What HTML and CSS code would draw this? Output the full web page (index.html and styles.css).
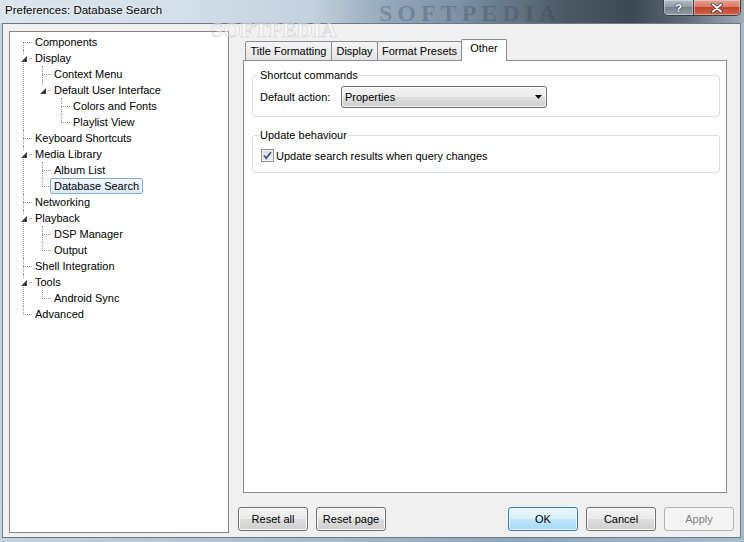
FILE: index.html
```html
<!DOCTYPE html>
<html lang="en">
<head>
    <meta charset="UTF-8">
    <title>Preferences: Database Search</title>
    <link rel="stylesheet" href="styles.css">
</head>
<body>
    <div class="window">
        <div class="titlebar">
            <span class="title">Preferences: Database Search</span>
            <div class="caption">
                <span class="cap-btn cap-help">?</span>
                <span class="cap-btn cap-close">
                    <svg width="12" height="10" viewBox="0 0 12 10">
                        <path d="M2 1.5 L10 8.5 M10 1.5 L2 8.5" stroke="#3a3f45" stroke-width="3.6" stroke-linecap="round"/>
                        <path d="M2 1.5 L10 8.5 M10 1.5 L2 8.5" stroke="#ffffff" stroke-width="2" stroke-linecap="round"/>
                    </svg>
                </span>
            </div>
        </div>

        <div class="client">
            <div class="tree-box">
                <ul class="tree">
                    <li><div class="row"><span class="label">Components</span></div></li>
                    <li>
                        <span class="exp"><svg width="6" height="6" viewBox="0 0 6 6"><polygon points="6,0 6,6 0,6" fill="#3c3c3c"/></svg></span>
                        <div class="row"><span class="label">Display</span></div>
                        <ul>
                            <li><div class="row"><span class="label">Context Menu</span></div></li>
                            <li>
                                <span class="exp"><svg width="6" height="6" viewBox="0 0 6 6"><polygon points="6,0 6,6 0,6" fill="#3c3c3c"/></svg></span>
                                <div class="row"><span class="label">Default User Interface</span></div>
                                <ul>
                                    <li><div class="row"><span class="label">Colors and Fonts</span></div></li>
                                    <li><div class="row"><span class="label">Playlist View</span></div></li>
                                </ul>
                            </li>
                        </ul>
                    </li>
                    <li><div class="row"><span class="label">Keyboard Shortcuts</span></div></li>
                    <li>
                        <span class="exp"><svg width="6" height="6" viewBox="0 0 6 6"><polygon points="6,0 6,6 0,6" fill="#3c3c3c"/></svg></span>
                        <div class="row"><span class="label">Media Library</span></div>
                        <ul>
                            <li><div class="row"><span class="label">Album List</span></div></li>
                            <li><div class="row"><span class="label selected">Database Search</span></div></li>
                        </ul>
                    </li>
                    <li><div class="row"><span class="label">Networking</span></div></li>
                    <li>
                        <span class="exp"><svg width="6" height="6" viewBox="0 0 6 6"><polygon points="6,0 6,6 0,6" fill="#3c3c3c"/></svg></span>
                        <div class="row"><span class="label">Playback</span></div>
                        <ul>
                            <li><div class="row"><span class="label">DSP Manager</span></div></li>
                            <li><div class="row"><span class="label">Output</span></div></li>
                        </ul>
                    </li>
                    <li><div class="row"><span class="label">Shell Integration</span></div></li>
                    <li>
                        <span class="exp"><svg width="6" height="6" viewBox="0 0 6 6"><polygon points="6,0 6,6 0,6" fill="#3c3c3c"/></svg></span>
                        <div class="row"><span class="label">Tools</span></div>
                        <ul>
                            <li><div class="row"><span class="label">Android Sync</span></div></li>
                        </ul>
                    </li>
                    <li><div class="row"><span class="label">Advanced</span></div></li>
                </ul>
            </div>

            <div class="right">
                <div class="tabs">
                    <span class="tab tab-title">Title Formatting</span>
                    <span class="tab tab-display">Display</span>
                    <span class="tab tab-presets">Format Presets</span>
                    <span class="tab tab-other active">Other</span>
                </div>

                <div class="panel">
                    <fieldset class="group">
                        <legend>Shortcut commands</legend>
                        <div class="field-row">
                            <span class="field-label">Default action:</span>
                            <div class="combo">
                                <span>Properties</span>
                                <svg width="7" height="4" viewBox="0 0 7 4"><polygon points="0,0 7,0 3.5,4" fill="#000"/></svg>
                            </div>
                        </div>
                    </fieldset>

                    <fieldset class="group group-update">
                        <legend>Update behaviour</legend>
                        <div class="check-row">
                            <span class="checkbox">
                                <svg width="11" height="11" viewBox="0 0 11 11"><polyline points="2,5.5 4.3,8.3 9,2" fill="none" stroke="#3e5a8c" stroke-width="1.8"/></svg>
                            </span>
                            <span>Update search results when query changes</span>
                        </div>
                    </fieldset>
                </div>

                <div class="buttons">
                    <div class="btn-group">
                        <button type="button" class="btn">Reset all</button>
                        <button type="button" class="btn">Reset page</button>
                    </div>
                    <div class="btn-group">
                        <button type="button" class="btn btn-default">OK</button>
                        <button type="button" class="btn">Cancel</button>
                        <button type="button" class="btn" disabled>Apply</button>
                    </div>
                </div>
            </div>
        </div>

        <span class="watermark wm-big">SOFTPEDIA</span>
        <span class="watermark wm-small">SOFTPEDIA</span>
    </div>
</body>
</html>
```

FILE: styles.css
```css
body {
    margin: 0;
    font-family: "Liberation Sans", Arial, sans-serif;
    font-size: 11px;
    color: #000;
}

.window {
    position: relative;
    width: 744px;
    height: 542px;
    display: flex;
    flex-direction: column;
    background: linear-gradient(90deg, #c3d2de 0%, #a9bccb 40%, #8ea5b9 70%, #a7bccd 100%);
    overflow: hidden;
}

/* glass title bar */
.titlebar {
    height: 23px;
    flex-shrink: 0;
    display: flex;
    justify-content: space-between;
    align-items: flex-start;
    padding-left: 5px;
    background: linear-gradient(90deg, #dbe5ee 0%, #d2dee8 25%, #c2d1de 42%, #93a8ba 52%, #7b90a3 62%, #4b5965 76%, #3c4955 85%, #5d6b77 92%, #9eacb8 100%);
}

.title {
    font-size: 11.5px;
    line-height: 20px;
    color: #000;
    text-shadow: 0 0 6px rgba(255, 255, 255, 0.9), 0 0 2px rgba(255, 255, 255, 0.8);
}

.caption {
    display: flex;
    height: 16px;
    margin-right: 3px;
    border: 1px solid #383e45;
    border-top: 0;
    border-radius: 0 0 5px 5px;
    overflow: hidden;
    box-sizing: border-box;
}

.cap-btn {
    display: flex;
    align-items: center;
    justify-content: center;
    box-shadow: inset 0 0 0 1px rgba(255, 255, 255, 0.35);
}

.cap-help {
    width: 29px;
    background: linear-gradient(#b3bcc4 0%, #8f9ba5 50%, #76838e 50%, #8e9aa4 100%);
    color: #fff;
    font-weight: bold;
    font-size: 11px;
    text-shadow: 0 0 2px #2c3237, 0 0 1px #2c3237;
}

.cap-close {
    width: 46px;
    border-left: 1px solid #383e45;
    background: linear-gradient(#e3a292 0%, #d47560 50%, #c24429 50%, #d3664b 100%);
}

/* client area */
.client {
    flex: 1;
    display: flex;
    gap: 9px;
    margin: 0 3px 4px 2px;
    padding: 7px 6px 4px 6px;
    border: 1px solid #6d7a86;
    background-color: #f0f0f0;
}

.tree-box {
    width: 220px;
    flex-shrink: 0;
    box-sizing: border-box;
    border: 1px solid #828790;
    background-color: #fff;
    padding-top: 2px;
}

.tree,
.tree ul {
    list-style: none;
    margin: 0;
    padding: 0;
}

.tree ul {
    margin-left: -2px;
}

.tree li {
    position: relative;
    padding-left: 21px;
}

.tree li::before {
    content: "";
    position: absolute;
    left: 13px;
    top: 8px;
    width: 9px;
    border-top: 1px dotted #9a9a9a;
}

.tree li::after {
    content: "";
    position: absolute;
    left: 13px;
    top: 0;
    bottom: 0;
    border-left: 1px dotted #9a9a9a;
}

.tree li:last-child::after {
    bottom: auto;
    height: 9px;
}

.tree > li:first-child::after {
    top: 8px;
}

.exp {
    position: absolute;
    z-index: 1;
    left: 9px;
    top: 4px;
    width: 9px;
    height: 9px;
    background-color: #fff;
    display: flex;
    align-items: center;
    justify-content: center;
}

.row {
    height: 16px;
    display: flex;
    align-items: center;
}

.label {
    line-height: 14px;
    padding: 0 3px;
    border: 1px solid transparent;
    border-radius: 2px;
    white-space: nowrap;
}

.label.selected {
    border-color: #84acdd;
    background: linear-gradient(#f1f7fe, #dcebfc);
}

/* right side */
.right {
    flex: 1;
    display: flex;
    flex-direction: column;
}

.tabs {
    height: 21px;
    margin: 8px 7px 0 5px;
    padding-left: 2px;
    display: flex;
    align-items: flex-end;
}

.tab {
    box-sizing: border-box;
    height: 19px;
    line-height: 18px;
    margin-right: -1px;
    text-align: center;
    border: 1px solid #898c95;
    border-bottom: 0;
    border-radius: 2px 2px 0 0;
    background: linear-gradient(#f5f5f5, #e4e4e4);
    white-space: nowrap;
}

.tab-title { width: 87px; }
.tab-display { width: 47px; }
.tab-presets { width: 85px; }
.tab-other { width: 46px; }

.tab.active {
    position: relative;
    z-index: 1;
    height: 22px;
    line-height: 17px;
    margin-bottom: -1px;
    background: #fff;
}

.panel {
    flex: 1;
    margin: 0 7px 0 5px;
    padding: 8px 6px 0 8px;
    border: 1px solid #898c95;
    background-color: #fff;
}

.group {
    min-width: 0;
    margin: 0;
    padding: 4px 7px 8px 7px;
    border: 1px solid #d5dfe5;
    border-radius: 3px;
}

.group legend {
    padding: 0 1px;
    margin-left: -1px;
    line-height: 13px;
}

.group-update {
    margin-top: 12px;
    padding-top: 7px;
    padding-bottom: 10px;
}

.field-row {
    display: flex;
    align-items: center;
    height: 22px;
}

.field-label {
    width: 81px;
}

.combo {
    width: 206px;
    height: 22px;
    box-sizing: border-box;
    padding: 0 4px 0 3px;
    display: flex;
    align-items: center;
    justify-content: space-between;
    border: 1px solid #707070;
    border-radius: 3px;
    background: linear-gradient(#f2f2f2 0%, #ebebeb 50%, #dddddd 50%, #cfcfcf 100%);
    box-shadow: inset 0 0 0 1px rgba(255, 255, 255, 0.7);
}

.check-row {
    display: flex;
    align-items: center;
    height: 13px;
}

.checkbox {
    width: 13px;
    height: 13px;
    box-sizing: border-box;
    margin: 0 2px 0 1px;
    border: 1px solid #8e8f8f;
    background: linear-gradient(135deg, #d3d8de, #f7f7f7);
    box-shadow: inset 0 0 0 1px #f4f4f4;
    display: flex;
    align-items: center;
    justify-content: center;
}

/* dialog buttons */
.buttons {
    height: 24px;
    margin: 14px 0 2px 0;
    display: flex;
    justify-content: space-between;
}

.btn-group {
    display: flex;
    gap: 8px;
}

.btn {
    width: 70px;
    height: 24px;
    padding: 0;
    font-family: inherit;
    font-size: 11px;
    color: #000;
    border: 1px solid #707070;
    border-radius: 3px;
    background: linear-gradient(#f2f2f2 0%, #ebebeb 50%, #dddddd 50%, #cfcfcf 100%);
    box-shadow: inset 0 0 0 1px #fbfbfb;
}

.btn-default {
    border-color: #3c7fb1;
    background: linear-gradient(#eaf6fd 0%, #d9f0fc 50%, #bee6fd 50%, #a7d9f5 100%);
    box-shadow: inset 0 0 0 1px #e6f5fd;
}

.btn:disabled {
    color: #838383;
    border-color: #adb2b5;
    background: #f4f4f4;
    box-shadow: none;
}

/* softpedia watermark over the screenshot */
.watermark {
    position: absolute;
    font-family: "Liberation Serif", serif;
    font-weight: bold;
    line-height: 1;
    white-space: nowrap;
    pointer-events: none;
}

.wm-big {
    left: 379px;
    top: 1px;
    font-size: 24px;
    letter-spacing: 5px;
    color: rgba(45, 65, 85, 0.28);
}

.wm-small {
    left: 211px;
    top: 19px;
    font-size: 22px;
    color: rgba(255, 255, 255, 0.55);
    -webkit-text-stroke: 0.6px rgba(150, 160, 170, 0.45);
}
```
